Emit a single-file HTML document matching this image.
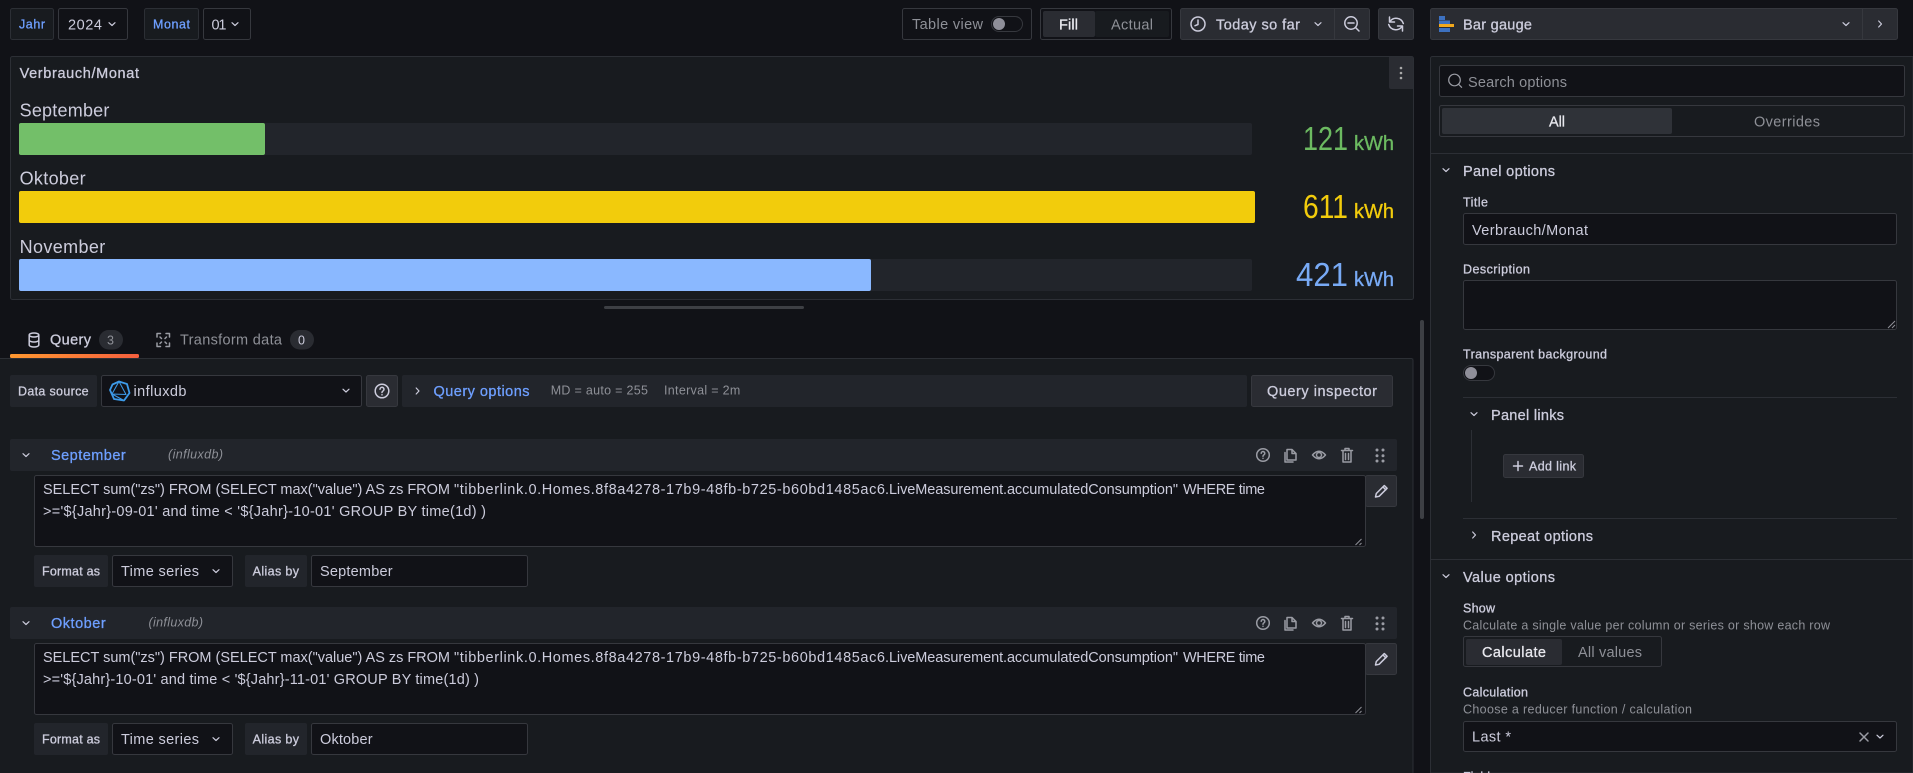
<!DOCTYPE html>
<html lang="en"><head><meta charset="utf-8"><title>Bar gauge</title>
<style>
html,body{margin:0;padding:0;background:#111217;width:1913px;height:773px;overflow:hidden}
svg{display:block;font-family:"Liberation Sans",sans-serif}
text{fill:currentColor;font-size:14.5px;color:#ccccdc}
.s{color:#8e9097}.b{color:#6e9fff}.m{stroke:currentColor;stroke-width:.3px}
.sm{font-size:12.5px}.w{color:#e8e8ee}
.ic{fill:none;stroke:#ccccdc;stroke-width:1.5;stroke-linecap:round;stroke-linejoin:round}
.ig{fill:none;stroke:#9a9ca4;stroke-width:1.5;stroke-linecap:round;stroke-linejoin:round}
.in{fill:#111217;stroke:#36383e}.bt{fill:#2a2c32;stroke:#36383e}.bd{fill:none;stroke:#36383e}
</style></head><body>
<svg width="1913" height="773" viewBox="0 0 1913 773" xmlns="http://www.w3.org/2000/svg">
<defs><linearGradient id="g" x1="0" x2="1" y1="0" y2="0"><stop offset="0" stop-color="#ff9830"/><stop offset="1" stop-color="#f55f3e"/></linearGradient>
<path id="cd" d="M-3-1.300L0 1.500L3-1.300" fill="none" stroke="#ccccdc" stroke-width="1.200" stroke-linecap="round" stroke-linejoin="round"/>
<path id="cr" d="M-1.300-3L1.500 0L-1.300 3" fill="none" stroke="#ccccdc" stroke-width="1.200" stroke-linecap="round" stroke-linejoin="round"/></defs>
<rect width="1913" height="773" fill="#111217"/>

<!-- top bar -->
<rect x="10.500" y="8.500" width="43" height="31" rx="2" fill="#181b1f" stroke="#2c2f35"/>
<text x="19" y="28.500" class="b sm m" textLength="26">Jahr</text>
<rect x="58.500" y="8.500" width="69" height="31" rx="2" class="in"/>
<text x="68" y="29.500" textLength="34">2024</text><use href="#cd" x="112" y="24"/>
<rect x="144.500" y="8.500" width="54" height="31" rx="2" fill="#181b1f" stroke="#2c2f35"/>
<text x="153" y="28.500" class="b sm m" textLength="37">Monat</text>
<rect x="203.500" y="8.500" width="47" height="31" rx="2" class="in"/>
<text x="211.500" y="29.500" textLength="15">01</text><use href="#cd" x="235" y="24"/>

<rect x="902.500" y="8.500" width="129" height="31" rx="2" class="in"/>
<text x="912" y="29" class="s" textLength="71">Table view</text>
<rect x="991.500" y="16.500" width="31" height="15" rx="7.500" fill="#111217" stroke="#36383e"/><circle cx="999" cy="24" r="6" fill="#8f8f99"/>
<rect x="1040.500" y="8.500" width="131" height="31" rx="2" class="in"/>
<rect x="1095" y="11" width="74" height="26" rx="2" fill="#181b1f"/>
<rect x="1043" y="11" width="52" height="26" rx="2" fill="#2a2c32"/>
<text x="1059" y="29.500" class="w m" textLength="19">Fill</text>
<text x="1111" y="29.500" class="s" textLength="42">Actual</text>
<rect x="1180.500" y="8.500" width="189" height="31" rx="2" class="bt" fill="#22252b"/>
<line x1="1334.500" y1="8" x2="1334.500" y2="40" stroke="#36383e"/>
<circle cx="1198" cy="24" r="7" class="ic"/><path d="M1198 20v4.500l-3 1.200" class="ic"/>
<text x="1216" y="29.500" class="m" textLength="84">Today so far</text><use href="#cd" x="1318" y="24"/>
<circle cx="1351" cy="23" r="6.200" class="ic"/><path d="M1348 23h6M1355.500 27.500l3.500 3.500" class="ic"/>
<rect x="1378.500" y="8.500" width="35" height="31" rx="2" class="bt"/>
<path d="M1389.500 17v5h5M1390 21.500a7.500 7.500 0 0 1 13.300 2M1402.500 31v-5h-5M1402 26.500a7.500 7.500 0 0 1-13.300-2" class="ic"/>
<rect x="1430.500" y="8.500" width="467" height="31" rx="2" class="bt"/>
<line x1="1862.500" y1="8" x2="1862.500" y2="40" stroke="#36383e"/>
<rect x="1439" y="16" width="6" height="4" fill="#3d71c0"/><rect x="1439" y="20.500" width="11" height="3.500" fill="#3d71c0"/><rect x="1439" y="24" width="15" height="3" fill="#f2a81c"/><rect x="1439" y="28" width="11" height="4" fill="#3d71c0"/>
<text x="1463" y="29.500" class="m" textLength="69">Bar gauge</text>
<use href="#cd" x="1846" y="24"/><use href="#cr" x="1880" y="24"/>

<!-- viz panel -->
<rect x="10.500" y="56.500" width="1403" height="243" rx="2" fill="#181b1f" stroke="#2c2f35"/>
<text x="19.600" y="78" class="m" textLength="119.400">Verbrauch/Monat</text>
<path d="M1389 57h24v32h-22a2 2 0 0 1-2-2z" fill="#2a2c32"/>
<circle cx="1401" cy="68" r="1.300" fill="#aaa"/><circle cx="1401" cy="73" r="1.300" fill="#aaa"/><circle cx="1401" cy="78" r="1.300" fill="#aaa"/>

<text x="19.600" y="116.500" style="font-size:18px" textLength="89.800">September</text>
<rect x="19" y="123" width="1233" height="32" rx="2" fill="#22252b"/>
<rect x="19" y="123" width="246" height="32" rx="2" fill="#73bf69"/>
<text x="1303" y="150" style="font-size:33px;color:#6cba61" textLength="45" lengthAdjust="spacingAndGlyphs">121</text>
<text x="1354" y="150" style="font-size:20px;color:#6cba61" class="m" textLength="40">kWh</text>

<text x="19.600" y="184.500" style="font-size:18px" textLength="66">Oktober</text>
<rect x="19" y="191" width="1236" height="32" rx="2" fill="#f2cc0c"/>
<text x="1303" y="218" style="font-size:33px;color:#f2cc0c" textLength="45" lengthAdjust="spacingAndGlyphs">611</text>
<text x="1354" y="218" style="font-size:20px;color:#f2cc0c" class="m" textLength="40">kWh</text>

<text x="19.600" y="253" style="font-size:18px" textLength="85.700">November</text>
<rect x="19" y="259" width="1233" height="32" rx="2" fill="#22252b"/>
<rect x="19" y="259" width="852" height="32" rx="2" fill="#8ab8ff"/>
<text x="1296" y="286" style="font-size:33px;color:#78aaf5" textLength="52" lengthAdjust="spacingAndGlyphs">421</text>
<text x="1354" y="286" style="font-size:20px;color:#78aaf5" class="m" textLength="40">kWh</text>

<!-- splitter -->
<rect x="604" y="306" width="200" height="3" rx="1.500" fill="#3d3f44"/>

<!-- tabs -->
<rect x="0" y="358" width="1413.500" height="415" fill="#181b1f"/>
<path d="M0 358.500H1411a2 2 0 0 1 2 2V773" fill="none" stroke="#2c2f35"/>
<rect x="10" y="354" width="129" height="4" rx="1.500" fill="url(#g)"/>
<g class="ic"><ellipse cx="34" cy="335" rx="4.800" ry="2"/><path d="M29.200 335v10c0 1.100 2.200 2 4.800 2s4.800-.9 4.800-2v-10M29.200 340c0 1.100 2.200 2 4.800 2s4.800-.9 4.800-2"/></g>
<text x="50" y="344.500" class="m" textLength="41">Query</text>
<rect x="99" y="330" width="24" height="19.500" rx="9.750" fill="#2a2c32"/>
<text x="107" y="344.500" class="s sm" textLength="8">3</text>
<path d="M157 337v-3.500h3.500M166 333.500h3.500v3.500M169.500 343v3.500h-3.500M160.500 346.500h-3.500v-3.500M160 337l1.500 1.500M166.500 337l-1.500 1.500M160 343.500l1.500-1.500M166.500 343.500l-1.500-1.500" class="ig"/>
<text x="180" y="344.500" class="s" textLength="102">Transform data</text>
<rect x="290" y="330" width="24" height="19.500" rx="9.750" fill="#2a2c32"/>
<text x="298" y="344.500" class="sm" style="color:#ccccdc" textLength="8">0</text>

<!-- data source row -->
<rect x="10" y="375" width="87" height="32" rx="2" fill="#22252b"/>
<text x="18" y="395.500" class="sm m" textLength="70.600">Data source</text>
<rect x="101.500" y="375.500" width="260" height="31" rx="2" class="in"/>
<g fill="none" stroke="#3d9be9" stroke-width="1.800" stroke-linejoin="round"><path d="M119 381.500L127 384L129.500 393L124 400.500L114 399L110 390L112.500 384.500Z"/><path stroke-width="1" d="M119 381.500L112 394L124 400.500M119 381.500L126 394.500L112 394"/></g>
<text x="133.500" y="396" textLength="53">influxdb</text><use href="#cd" x="346" y="390.500"/>
<rect x="366.500" y="375.500" width="31" height="31" rx="2" class="bt"/>
<circle cx="382" cy="391" r="6.800" class="ic"/><path d="M380 389.200a2 2 0 1 1 3 1.800q-1 .6-1 1.500" class="ic"/><circle cx="382" cy="394.800" r=".8" fill="#ccccdc"/>
<rect x="402" y="375" width="845" height="32" rx="2" fill="#22252b"/>
<use href="#cr" x="417.500" y="391"/>
<text x="433.500" y="396" class="b m" textLength="96">Query options</text>
<text x="550.700" y="394.500" class="s sm" textLength="97.300">MD = auto = 255</text>
<text x="664" y="394.500" class="s sm" textLength="76.300">Interval = 2m</text>
<rect x="1251.500" y="375.500" width="141" height="31" rx="2" class="bt"/>
<text x="1267" y="396" class="m" textLength="110">Query inspector</text>

<!-- query A -->
<rect x="10" y="439" width="1387" height="32" rx="2" fill="#22252b"/>
<use href="#cd" x="26" y="455"/>
<text x="51" y="460" class="b m" textLength="74.700">September</text>
<text x="168" y="458.500" class="s sm" style="font-style:italic" textLength="55">(influxdb)</text>
<g id="icons" class="ig"><circle cx="1263" cy="455" r="6.300"/><path d="M1261.200 453.300a1.800 1.800 0 1 1 2.700 1.600q-.9.500-.9 1.300"/><path d="M1263 458.200v.1"/>
<path d="M1287 449.500h5l4 4v6.500h-9zM1292 449.500v4h4M1285 452.500v9.500h8"/>
<path d="M1312.500 455q6.500-7.500 13 0q-6.500 7.500-13 0z"/><circle cx="1319" cy="455" r="2.500"/>
<path d="M1341.500 450.500h11M1345 450.500v-2h4v2M1343 450.500v11.500h8v-11.500M1345.500 453.500v6M1348.500 453.500v6"/></g>
<g fill="#9a9ca4"><circle cx="1377" cy="450" r="1.500"/><circle cx="1383" cy="450" r="1.500"/><circle cx="1377" cy="455.700" r="1.500"/><circle cx="1383" cy="455.700" r="1.500"/><circle cx="1377" cy="461" r="1.500"/><circle cx="1383" cy="461" r="1.500"/></g>
<rect x="34.500" y="475.500" width="1331" height="71" rx="2" class="in"/>
<text x="43" y="494" textLength="407">SELECT sum("zs") FROM (SELECT max("value") AS zs FROM</text>
<text x="454" y="494" textLength="431">"tibberlink.0.Homes.8f8a4278-17b9-48fb-b725-b60bd1485ac6</text>
<text x="885" y="494" textLength="293">.LiveMeasurement.accumulatedConsumption"</text>
<text x="1183" y="494" textLength="82">WHERE time</text>
<text x="43" y="516" textLength="443">&gt;='${Jahr}-09-01' and time &lt; '${Jahr}-10-01' GROUP BY time(1d) )</text>
<path d="M1355.500 545l6-6M1359.500 545l2-2" stroke="#8e9097" fill="none"/>
<rect x="1365.500" y="475.500" width="31" height="31" rx="2" class="bt"/>
<path d="M1375.500 497l.8-3.500 8-8 2.800 2.800-8 8zM1383 487l2.800 2.800" class="ic"/>
<rect x="34" y="555" width="74" height="32" rx="2" fill="#22252b"/>
<text x="42" y="575.500" class="sm m" textLength="58">Format as</text>
<rect x="112.500" y="555.500" width="120" height="31" rx="2" class="in"/>
<text x="121" y="576" textLength="78">Time series</text><use href="#cd" x="216" y="571"/>
<rect x="245" y="555" width="62" height="32" rx="2" fill="#22252b"/>
<text x="252.600" y="575.500" class="sm m" textLength="46.400">Alias by</text>
<rect x="311.500" y="555.500" width="216" height="31" rx="2" class="in"/>
<text x="320" y="576" textLength="72.600">September</text>

<!-- query B -->
<rect x="10" y="607" width="1387" height="32" rx="2" fill="#22252b"/>
<use href="#cd" x="26" y="623"/>
<text x="51" y="628" class="b m" textLength="54.700">Oktober</text>
<text x="148.500" y="626.500" class="s sm" style="font-style:italic" textLength="54.500">(influxdb)</text>
<use href="#icons" y="168"/>
<g fill="#9a9ca4"><circle cx="1377" cy="618" r="1.500"/><circle cx="1383" cy="618" r="1.500"/><circle cx="1377" cy="623.700" r="1.500"/><circle cx="1383" cy="623.700" r="1.500"/><circle cx="1377" cy="629" r="1.500"/><circle cx="1383" cy="629" r="1.500"/></g>
<rect x="34.500" y="643.500" width="1331" height="71" rx="2" class="in"/>
<text x="43" y="662" textLength="407">SELECT sum("zs") FROM (SELECT max("value") AS zs FROM</text>
<text x="454" y="662" textLength="431">"tibberlink.0.Homes.8f8a4278-17b9-48fb-b725-b60bd1485ac6</text>
<text x="885" y="662" textLength="293">.LiveMeasurement.accumulatedConsumption"</text>
<text x="1183" y="662" textLength="82">WHERE time</text>
<text x="43" y="684" textLength="436">&gt;='${Jahr}-10-01' and time &lt; '${Jahr}-11-01' GROUP BY time(1d) )</text>
<path d="M1355.500 713l6-6M1359.500 713l2-2" stroke="#8e9097" fill="none"/>
<rect x="1365.500" y="643.500" width="31" height="31" rx="2" class="bt"/>
<path d="M1375.500 665l.8-3.500 8-8 2.800 2.800-8 8zM1383 655l2.800 2.800" class="ic"/>
<rect x="34" y="723" width="74" height="32" rx="2" fill="#22252b"/>
<text x="42" y="743.500" class="sm m" textLength="58">Format as</text>
<rect x="112.500" y="723.500" width="120" height="31" rx="2" class="in"/>
<text x="121" y="744" textLength="78">Time series</text><use href="#cd" x="216" y="739"/>
<rect x="245" y="723" width="62" height="32" rx="2" fill="#22252b"/>
<text x="252.600" y="743.500" class="sm m" textLength="46.400">Alias by</text>
<rect x="311.500" y="723.500" width="216" height="31" rx="2" class="in"/>
<text x="320" y="744" textLength="52.600">Oktober</text>

<!-- scrollbar -->
<rect x="1420" y="320" width="4" height="199" rx="2" fill="#3d3f44"/>

<!-- options pane -->
<path d="M1913 56.500H1432.500a2 2 0 0 0-2 2V773h482.500z" fill="#181b1f" stroke="#2c2f35"/>
<rect x="1439.500" y="65.500" width="465" height="31" rx="2" class="in"/>
<circle cx="1454.500" cy="80" r="5.800" fill="none" stroke="#9a9ca4" stroke-width="1.200"/><path d="M1458.800 84.500l2.800 2.800" stroke="#9a9ca4" stroke-width="1.200" stroke-linecap="round"/>
<text x="1468" y="87" class="s" textLength="99">Search options</text>
<rect x="1439.500" y="105.500" width="465" height="31" rx="2" fill="#181b1f" stroke="#36383e"/>
<rect x="1442" y="108" width="230" height="26" rx="2" fill="#2f3238"/>
<text x="1549" y="126.500" class="w m" textLength="16">All</text>
<text x="1754" y="126.500" class="s" textLength="66">Overrides</text>
<line x1="1431" y1="153.500" x2="1913" y2="153.500" stroke="#2c2f35"/>
<use href="#cd" x="1446" y="170"/>
<text x="1463" y="176" class="m" textLength="92">Panel options</text>
<text x="1463" y="206.500" class="sm m" textLength="25">Title</text>
<rect x="1463.500" y="213.500" width="433" height="31" rx="2" class="in"/>
<text x="1472" y="235" textLength="116">Verbrauch/Monat</text>
<text x="1463" y="273.500" class="sm m" textLength="67">Description</text>
<rect x="1463.500" y="280.500" width="433" height="49" rx="2" class="in"/>
<path d="M1888 328l7-7M1892 328l3-3" stroke="#8e9097" fill="none"/>
<text x="1463" y="358.500" class="sm m" textLength="144">Transparent background</text>
<rect x="1463.500" y="365.500" width="31" height="15" rx="7.500" fill="#111217" stroke="#36383e"/><circle cx="1471" cy="373" r="6" fill="#8f8f99"/>
<line x1="1463" y1="397.500" x2="1897" y2="397.500" stroke="#2c2f35"/>
<use href="#cd" x="1474" y="414"/>
<text x="1491" y="420" class="m" textLength="73">Panel links</text>
<line x1="1471.500" y1="430" x2="1471.500" y2="502" stroke="#2c2f35"/>
<rect x="1503.500" y="454.500" width="80" height="23" rx="2" class="bt"/>
<path d="M1518 461.500v9M1513.500 466h9" class="ic"/>
<text x="1529" y="470.500" class="sm m" textLength="47">Add link</text>
<line x1="1463" y1="518.500" x2="1897" y2="518.500" stroke="#2c2f35"/>
<use href="#cr" x="1474" y="535"/>
<text x="1491" y="541" class="m" textLength="102">Repeat options</text>
<line x1="1431" y1="559.500" x2="1913" y2="559.500" stroke="#2c2f35"/>
<use href="#cd" x="1446" y="576"/>
<text x="1463" y="582" class="m" textLength="92">Value options</text>
<text x="1463" y="612.500" class="sm m" textLength="32">Show</text>
<text x="1463" y="629.500" class="s sm" textLength="367">Calculate a single value per column or series or show each row</text>
<rect x="1463.500" y="636.500" width="198" height="30" rx="2" fill="#181b1f" stroke="#36383e"/>
<rect x="1466" y="639" width="96" height="26" rx="2" fill="#2a2c32"/>
<text x="1482" y="657" class="w m" textLength="64">Calculate</text>
<text x="1578" y="657" class="s" textLength="64">All values</text>
<text x="1463" y="696.500" class="sm m" textLength="65">Calculation</text>
<text x="1463" y="713.500" class="s sm" textLength="229">Choose a reducer function / calculation</text>
<rect x="1463.500" y="721.500" width="433" height="30" rx="2" class="in"/>
<text x="1472" y="741.500" textLength="39">Last *</text>
<path d="M1860 733l8 8M1868 733l-8 8" class="ig"/><use href="#cd" x="1880" y="736.500"/>
<text x="1463" y="781" class="sm m">Fields</text>
</svg>
</body></html>
